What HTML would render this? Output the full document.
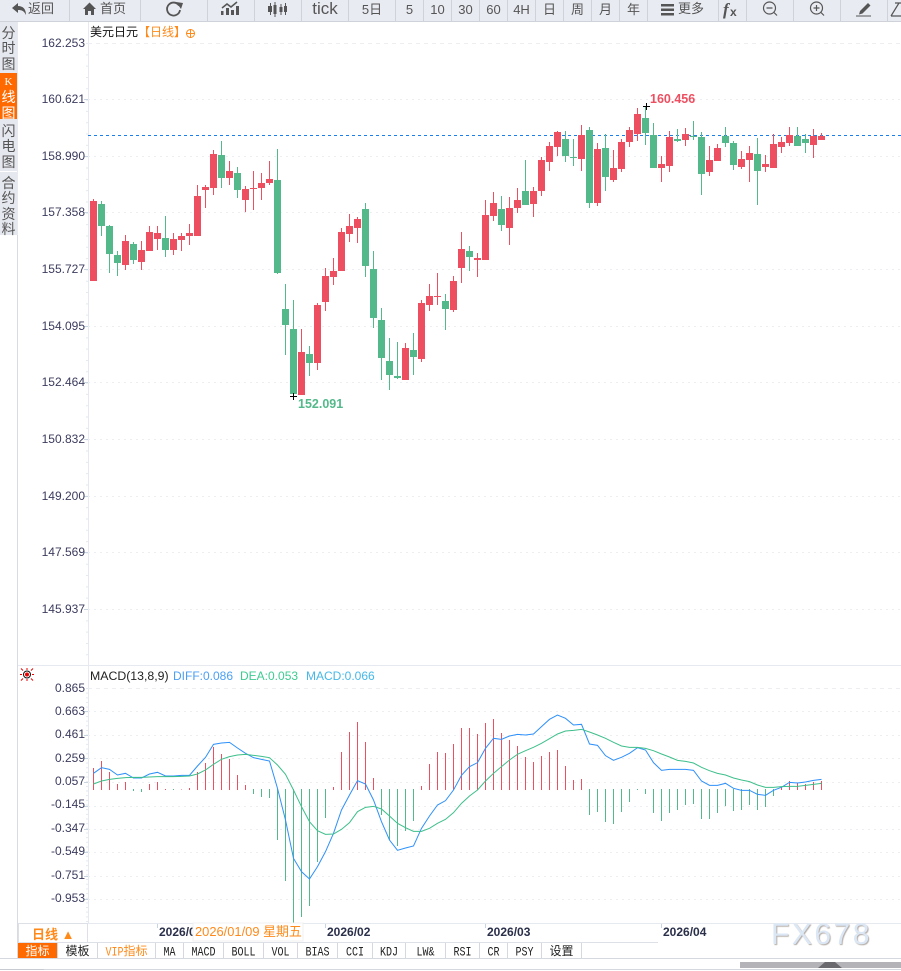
<!DOCTYPE html>
<html><head><meta charset="utf-8"><title>美元日元</title>
<style>
html,body{margin:0;padding:0;background:#fff;width:901px;height:971px;overflow:hidden;font-family:"Liberation Sans","Noto Sans CJK SC",sans-serif}
#p{position:relative;width:901px;height:971px;overflow:hidden}
.a{position:absolute;white-space:nowrap}
#tb{left:0;top:0;width:901px;height:21px;background:#e9ebf2;border-bottom:1px solid #d0d2da}
.b{position:absolute;top:0;height:21px;line-height:19px;text-align:center;color:#555;font-size:13px;border-left:1px solid #d0d2da;box-sizing:border-box}
.s{position:absolute;left:0;width:17px;background:#e6e8ef;color:#555;font-size:14px;line-height:15.3px;text-align:center;box-sizing:border-box}
.t{position:absolute;top:943px;height:15px;line-height:16px;text-align:center;box-sizing:border-box;border-right:1px solid #d5d8df;font-size:12px;color:#222;font-family:"Liberation Serif","Noto Serif CJK SC",serif}
.m{font-family:"Liberation Mono",monospace;font-size:10px;display:inline-block;transform:scaleY(1.25);color:#222}
svg text{font-family:"Liberation Sans","Noto Sans CJK SC",sans-serif}
</style></head><body><div id="p">

<div class="a" id="tb"></div>
<div class="b" style="left:69px;width:71px"></div>
<div class="b" style="left:140px;width:67px"></div>
<div class="b" style="left:207px;width:47px"></div>
<div class="b" style="left:254px;width:47px"></div>
<div class="b" style="left:301px;width:47px;font-size:17px;line-height:17px">tick</div>
<div class="b" style="left:348px;width:47px">5日</div>
<div class="b" style="left:395px;width:28px">5</div>
<div class="b" style="left:423px;width:28px">10</div>
<div class="b" style="left:451px;width:28px">30</div>
<div class="b" style="left:479px;width:28px">60</div>
<div class="b" style="left:507px;width:28px">4H</div>
<div class="b" style="left:535px;width:28px">日</div>
<div class="b" style="left:563px;width:28px">周</div>
<div class="b" style="left:591px;width:28px">月</div>
<div class="b" style="left:619px;width:28px">年</div>
<div class="b" style="left:647px;width:71px"></div>
<div class="b" style="left:718px;width:28px"></div>
<div class="b" style="left:746px;width:47px"></div>
<div class="b" style="left:793px;width:47px"></div>
<div class="b" style="left:840px;width:47px"></div>
<div class="b" style="left:887px;width:14px"></div>
<div class="a" style="left:28px;top:0;line-height:18px;font-size:13px;color:#555">返回</div>
<div class="a" style="left:100px;top:0;line-height:18px;font-size:13px;color:#555">首页</div>
<div class="a" style="left:678px;top:0;line-height:18px;font-size:13px;color:#555">更多</div>

<div class="s" style="top:22px;height:51px;padding-top:4px">分<br>时<br>图</div>
<div class="s" style="top:73px;height:46px;background:#ff6a00;color:#fff;padding-top:0"><span style="font-family:'Liberation Serif',serif;font-size:11px">K</span><br>线<br>图</div>
<div class="s" style="top:119px;height:52px;padding-top:5px">闪<br>电<br>图</div>
<div class="s" style="top:172px;height:63px;padding-top:4px">合<br>约<br>资<br>料</div>

<svg class="a" style="left:0;top:0" width="901" height="971" viewBox="0 0 901 971">
<!-- toolbar icons -->
<g fill="#555">
<path d="M12 8l6-5v3c5 0 8 3 8 9c-2-4-4-5-8-5v3z"/>
<path d="M83 9l6.500-6.500 6.500 6.500h-2v6h-3v-4h-3v4h-3V9z"/>
<path d="M176 2l7 1-2 6z"/>
<path d="M221 11h2.500v4H221zM226 8h3v7h-3zM231 10h3v5h-3zM236 6h3v9h-3z"/>
<path d="M268 6h2v-3h1v3h1v6h-1v3h-1v-3h-2z M273.500 5h1v-3h1v3h1v9h-1v3h-1v-3h-1z M279.500 7h1v-3h1v3h1v5h-1v3h-1v-3h-1z M284 6h1v-3h1v3h1v6h-1v3h-1v-3h-1z"/>
<path d="M661 4h13v2.500h-13zM661 8.500h13v2.500h-13zM661 13h13v2.500h-13z"/>
<path d="M860 11l8-8 2.500 2.500-8 8-3.500 1zM856 15.500h15v1h-15z"/>
</g>
<path d="M222 8l5-4 4 3 6-5" fill="none" stroke="#555" stroke-width="1.500"/>
<path d="M179 5.500a6.500 6.500 0 1 0 1 4.500" fill="none" stroke="#555" stroke-width="1.800"/>
<g fill="none" stroke="#555" stroke-width="1.200">
<circle cx="769.500" cy="8" r="6"/><path d="M774 12.500l3 3M766.500 8h6"/>
<circle cx="816.500" cy="8" r="6"/><path d="M821 12.500l3 3M813.500 8h6M816.500 5v6"/>
<path d="M891 16l8-13M895 3h6M891 16h10"/>
</g>
<text x="723" y="15" font-size="17" font-weight="bold" font-style="italic" fill="#555" style="font-family:'Liberation Serif',serif">f</text>
<text x="730" y="16" font-size="12" font-weight="bold" fill="#555">x</text>

<!-- frame lines -->
<path d="M17.500 22V958M88.500 22V923M18 665.500H901M18 923.500H901" stroke="#e6e9ef" fill="none"/>
<path d="M17.500 235V958" stroke="#d8dbe2"/>
<path d="M87 43V660" stroke="#c8d4e0" stroke-dasharray="1 10.320" fill="none"/>
<path d="M87 688V923" stroke="#c8d4e0" stroke-dasharray="1 3.660" fill="none"/>

<!-- grid -->
<g stroke="#eceef1" fill="none">
<path d="M88 43.500H901" stroke-dasharray="4 4"/>
<path stroke-dasharray="2 4" d="M88 99.500H901M88 156.500H901M88 212.500H901M88 269.500H901M88 326.500H901M88 382.500H901M88 439.500H901M88 496.500H901M88 552.500H901M88 609.500H901"/>
<path d="M88 688.500H901" stroke-dasharray="4 4"/>
<path stroke-dasharray="2 4" d="M88 711.500H901M88 735.500H901M88 758.500H901M88 782.500H901M88 806.500H901M88 829.500H901M88 852.500H901M88 876.500H901M88 899.500H901"/>
</g>
<path stroke="#c8d4e0" d="M84 99.500h4M84 156.500h4M84 212.500h4M84 269.500h4M84 326.500h4M84 382.500h4M84 439.500h4M84 496.500h4M84 552.500h4M84 609.500h4M84 711.500h4M84 735.500h4M84 758.500h4M84 782.500h4M84 806.500h4M84 829.500h4M84 852.500h4M84 876.500h4M84 899.500h4"/>

<!-- price axis -->
<g font-size="12" fill="#3b3b5e" text-anchor="end">
<text x="85" y="47">162.253</text><text x="85" y="103">160.621</text><text x="85" y="160">158.990</text><text x="85" y="216">157.358</text><text x="85" y="273">155.727</text><text x="85" y="330">154.095</text><text x="85" y="386">152.464</text><text x="85" y="443">150.832</text><text x="85" y="500">149.200</text><text x="85" y="556">147.569</text><text x="85" y="613">145.937</text>
<text x="85" y="692">0.865</text><text x="85" y="715">0.663</text><text x="85" y="738">0.461</text><text x="85" y="762">0.259</text><text x="85" y="785">0.057</text><text x="85" y="808">-0.145</text><text x="85" y="832">-0.347</text><text x="85" y="855">-0.549</text><text x="85" y="879">-0.751</text><text x="85" y="902">-0.953</text>
</g>

<!-- last price line -->
<path d="M88 135.500H901" stroke="#1a7fe8" stroke-dasharray="3 3" fill="none"/>

<!-- candles -->
<g transform="translate(93.5,130) scale(0.33333)" fill="none" shape-rendering="crispEdges">
<path stroke="#ee4f60" stroke-width="3" d="M0 207V453M96 315V420M144 333V420M168 288V363M192 288V360M240 309V375M264 309V363M288 282V345M312 165V318M336 165V234M360 60V195M408 93V165M456 168V246M480 123V240M504 129V210M528 93V165M624 597V795M672 519V720M696 414V543M720 384V465M744 294V423M768 252V336M792 261V339M936 639V750M984 510V696M1008 462V543M1032 429V525M1080 438V546M1104 306V459M1152 369V441M1176 210V390M1200 186V273M1248 201V345M1272 174V249M1320 171V261M1344 81V198M1368 36V123M1392 3V78M1464 -15V123M1512 39V228M1560 60V156M1584 27V126M1608 -9V51M1632 -66V33M1704 78V156M1728 3V126M1776 -6V48M1848 48V138M1872 42V93M1944 63V117M1968 48V156M2016 75V126M2040 12V114M2064 21V69M2088 -9V48M2160 -3V84M2184 9V30"/>
<path stroke="#ee4f60" stroke-width="21" d="M0 213V453M96 333V405M144 360V396M168 306V363M192 309V327M240 327V360M264 318V330M288 309V318M312 198V318M336 171V180M360 72V174M408 123V144M456 177V210M480 174V177M504 159V174M528 147V159M624 666V795M672 525V699M696 438V516M720 423V441M744 306V423M768 288V312M792 267V294M936 654V750M984 519V687M1008 498V525M1032 498V501M1080 453V540M1104 357V414M1152 384V390M1176 255V390M1200 219V258M1248 234V294M1272 210V234M1320 183V222M1344 90V183M1368 48V96M1392 6V51M1464 15V87M1512 57V219M1560 114V150M1584 36V117M1608 0V36M1632 -48V12M1704 102V114M1728 21V108M1776 12V30M1848 90V126M1872 54V93M1944 87V111M1968 69V90M2016 102V111M2040 42V114M2064 36V51M2088 15V39M2160 18V45M2184 18V30"/>
<path stroke="#53b98a" stroke-width="3" d="M24 213V318M48 285V429M72 363V438M120 336V402M216 258V381M384 33V174M432 111V204M552 57V432M576 462V675M600 510V795M648 648V738M816 219V441M840 363V594M864 534V750M888 624V780M912 636V747M960 609V735M1056 492V600M1128 348V423M1224 198V303M1296 90V225M1416 3V96M1440 27V108M1488 -9V234M1536 12V183M1656 -72V45M1680 -21V114M1752 -3V36M1800 -27V30M1824 6V195M1896 -9V51M1920 33V120M1992 24V225M2112 -9V48M2136 12V69"/>
<path stroke="#53b98a" stroke-width="21" d="M24 222V288M48 288V372M72 375V399M120 342V390M216 324V360M384 75V144M432 129V180M552 150V429M576 537V585M600 597V792M648 672V699M816 237V408M840 417V564M864 570V684M888 693V735M912 738V744M960 660V681M1056 513V537M1128 363V381M1224 237V285M1296 183V225M1416 27V78M1440 81V84M1488 0V219M1536 54V141M1656 -36V9M1680 15V114M1752 27V33M1800 18V21M1824 21V132M1896 18V39M1920 39V105M1992 72V123M2112 18V48M2136 27V39"/>
</g>

<!-- hi/lo marks -->
<path d="M643 106.500h7M646.500 103v7M290 396.500h7M293.500 393v7" stroke="#000" shape-rendering="crispEdges"/>
<text x="650" y="103" font-size="12.500" font-weight="bold" fill="#ee4f60">160.456</text>
<text x="298" y="408" font-size="12.500" font-weight="bold" fill="#53b98a">152.091</text>

<!-- MACD -->
<g transform="translate(93.5,710) scale(0.33333)" fill="none">
<g shape-rendering="crispEdges" stroke-width="3">
<path stroke="#ee4f60" d="M0 174V240M24 153V240M48 186V240M72 222V240M96 216V240M168 222V240M192 216V240M216 237V240M264 238V240M288 234V240M312 186V240M336 159V240M360 111V240M384 132V240M408 147V240M432 195V240M456 225V240M720 231V240M744 126V240M768 66V240M792 36V240M816 96V240M840 204V240M984 228V240M1008 162V240M1032 126V240M1056 129V240M1080 102V240M1104 54V240M1128 54V240M1152 72V240M1176 39V240M1200 27V240M1224 69V240M1248 90V240M1272 108V240M1296 141V240M1320 156V240M1344 138V240M1368 126V240M1392 120V240M1416 168V240M1440 210V240M1464 207V240M2064 231V240M2088 213V240M2112 219V240M2136 222V240M2160 216V240M2184 213V240"/>
<path stroke="#53b98a" d="M120 237V243M144 237V246M240 237V240M480 237V252M504 237V261M528 237V264M552 237V390M576 237V513M600 237V639M624 237V621M648 237V588M672 237V456M696 237V324M864 237V315M888 237V390M912 237V408M936 237V363M960 237V333M1488 237V315M1512 237V306M1536 237V336M1560 237V342M1584 237V306M1608 237V276M1632 237V240M1656 237V252M1680 237V309M1704 237V333M1728 237V309M1752 237V300M1776 237V285M1800 237V282M1824 237V327M1848 237V327M1872 237V309M1896 237V288M1920 237V303M1944 237V300M1968 237V285M1992 237V300M2016 237V291M2040 237V258"/>
</g>
<polyline stroke="#2e90fa" stroke-width="3" points="0,190 24,173 48,178 72,195 96,190 120,204 144,204 168,192 192,187 216,198 240,198 264,196 288,196 312,168 336,142 360,103 384,99 408,97 432,114 456,130 480,143 504,148 528,153 552,235 576,330 600,445 624,485 648,507 672,470 696,425 720,370 744,300 768,255 792,212 816,222 840,270 864,335 888,390 912,421 936,414 960,408 984,355 1008,318 1032,285 1056,272 1080,240 1104,196 1128,170 1152,158 1176,115 1200,85 1224,88 1248,78 1272,73 1296,75 1320,72 1344,50 1368,28 1392,15 1416,25 1440,45 1464,43 1488,102 1512,106 1536,137 1560,151 1584,142 1608,130 1632,113 1656,120 1680,158 1704,181 1728,178 1752,178 1776,178 1800,181 1824,213 1848,226 1872,226 1896,220 1920,235 1944,241 1968,241 1992,253 2016,256 2040,241 2064,232 2088,217 2112,219 2136,216 2160,211 2184,208"/>
<polyline stroke="#3dbf8b" stroke-width="3" points="0,222 24,213 48,208 72,205 96,203 120,202 144,202 168,201 192,200 216,200 240,200 264,199 288,198 312,192 336,180 360,163 384,148 408,140 432,135 456,133 480,136 504,139 528,143 552,165 576,193 600,240 624,290 648,335 672,362 696,373 720,372 744,358 768,338 792,305 816,292 840,289 864,297 888,318 912,340 936,353 960,364 984,364 1008,355 1032,340 1056,328 1080,308 1104,280 1128,258 1152,240 1176,213 1200,190 1224,170 1248,150 1272,133 1296,122 1320,112 1344,100 1368,86 1392,72 1416,63 1440,61 1464,58 1488,66 1512,75 1536,85 1560,97 1584,108 1608,112 1632,112 1656,115 1680,122 1704,132 1728,141 1752,151 1776,154 1800,159 1824,172 1848,182 1872,190 1896,195 1920,204 1944,210 1968,215 1992,225 2016,232 2040,232 2064,230 2088,229 2112,229 2136,226 2160,223 2184,220"/>
</g>

<!-- headers -->
<text x="90" y="36" font-size="12" fill="#111">美元日元</text>
<text x="138" y="36" font-size="12" fill="#ff8a1a">【日线】</text>
<g fill="none" stroke="#ff8a1a"><circle cx="190.500" cy="33.500" r="4"/><path d="M186 33.500h9M190.500 29v9"/></g>
<g stroke="#e00" fill="none"><circle cx="27" cy="674.500" r="3.500" stroke="#111"/><path d="M21 668.500l2 2M33 668.500l-2 2M21 680.500l2-2M33 680.500l-2-2M20 674.500h2M32 674.500h2M27 668v2M27 679v2"/></g>
<circle cx="27" cy="674.500" r="2" fill="#e00"/>
<text x="90" y="680" font-size="12.300" fill="#222">MACD(13,8,9)</text>
<text x="173" y="680" font-size="12" fill="#4a9ff5">DIFF:0.086</text>
<text x="240" y="680" font-size="12" fill="#3dcb92">DEA:0.053</text>
<text x="306" y="680" font-size="12" fill="#45b8e8">MACD:0.066</text>

<!-- date ticks -->
<path d="M157.500 924v4M325.500 924v4M485.500 924v4M661.500 924v4" stroke="#c8d4e0"/>
<path d="M18 923.500h70M18.500 923v20M87.500 923v20M18 942.500h640" stroke="#dde0e6" fill="none"/>
<g font-size="12" font-weight="bold" fill="#2a2f4a">
<text x="159" y="936">2026/0</text>
<text x="327" y="936">2026/02</text>
<text x="487" y="936">2026/03</text>
<text x="663" y="936">2026/04</text>
</g>
<rect x="193" y="923" width="110" height="18" fill="#fff" stroke="#f0f0f0"/>
<text x="195" y="936" font-size="12.900" fill="#ff8a1a">2026/01/09 星期五</text>
<text x="32" y="939" font-size="13" font-weight="bold" fill="#ff8a1a">日线 ▲</text>

<!-- bottom bars -->
<path d="M0 958.500H901M0 969.500H901" stroke="#d5d8df" fill="none"/>
<rect x="0" y="959" width="901" height="2" fill="#fff"/>
<path d="M582 958.500H901" stroke="#d5d8df"/>
<rect x="740" y="962" width="161" height="6" fill="#b3b3b8"/>
<path d="M818 968l7-6h10l7 6z" fill="#6a6a6e"/>
<path d="M0 958.500H18" stroke="#d5d8df"/>
<rect x="0" y="969" width="44" height="1" fill="#c8cbd2"/>
</svg>

<div class="t" style="left:18px;width:40px;background:#ff6a00;color:#fff;font-family:'Noto Sans CJK SC',sans-serif">指标</div>
<div class="t" style="left:58px;width:40px;font-family:'Noto Sans CJK SC',sans-serif">模板</div>
<div class="t" style="left:98px;width:58px;color:#ff8a1a"><span class="m" style="color:#ff8a1a">VIP</span><span style="font-family:'Noto Sans CJK SC',sans-serif">指标</span></div>
<div class="t" style="left:156px;width:28px"><span class="m">MA</span></div>
<div class="t" style="left:184px;width:40px"><span class="m">MACD</span></div>
<div class="t" style="left:224px;width:40px"><span class="m">BOLL</span></div>
<div class="t" style="left:264px;width:34px"><span class="m">VOL</span></div>
<div class="t" style="left:298px;width:40px"><span class="m">BIAS</span></div>
<div class="t" style="left:338px;width:35px"><span class="m">CCI</span></div>
<div class="t" style="left:373px;width:33px"><span class="m">KDJ</span></div>
<div class="t" style="left:406px;width:40px"><span class="m">LW&amp;</span></div>
<div class="t" style="left:446px;width:34px"><span class="m">RSI</span></div>
<div class="t" style="left:480px;width:28px"><span class="m">CR</span></div>
<div class="t" style="left:508px;width:34px"><span class="m">PSY</span></div>
<div class="t" style="left:542px;width:40px;font-family:'Noto Sans CJK SC',sans-serif">设置</div>

<div class="a" style="left:771px;top:917px;font-size:30px;line-height:36px;letter-spacing:2.500px;color:#dbe7f5;text-shadow:1px 1px 1px #b5aca6">FX678</div>
</div></body></html>
